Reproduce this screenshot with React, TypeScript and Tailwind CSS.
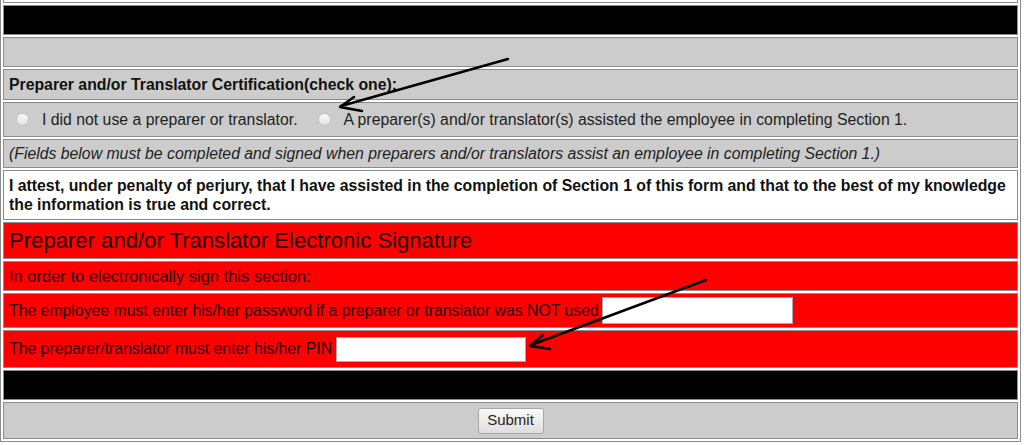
import React from 'react';

const row = 'shrink-0 border border-[#8c8c8c] px-[5px] flex items-center';

function Radio({ label }: { label: string }) {
	return (
		<label className="flex items-center">
			<span className="w-[13px] h-[13px] rounded-full border border-[#c4c4c4] bg-gradient-to-b from-[#fbfbfb] to-[#e2e2e2]" />
			<span className="ml-[13px]">{label}</span>
		</label>
	);
}

function Arrows() {
	return (
		<svg className="absolute inset-0 pointer-events-none" width="1024" height="445" viewBox="0 0 1024 445">
			<g stroke="#000" strokeWidth="2.5" strokeLinecap="round" fill="none">
				<line x1="508" y1="59" x2="341" y2="106" />
				<polyline points="354,97 340,107 362,111" strokeLinejoin="round" />
				<line x1="706" y1="280" x2="531" y2="345" />
				<polyline points="543,335 530,346 550,349" strokeLinejoin="round" />
			</g>
		</svg>
	);
}

export default function App() {
	return (
		<div className="relative w-[1024px] h-[445px] overflow-hidden bg-white text-[#222] font-['Liberation_Sans',Arial,sans-serif]">
			<div className="w-[1021px] border-x border-b border-[#8c8c8c] px-[2px] pb-[2px] flex flex-col gap-[2px]">
				<div className="shrink-0 h-[3px] border-x border-b border-[#8c8c8c] bg-white" />
				<div className={`${row} h-[30px] bg-black`} />
				<div className={`${row} h-[30px] bg-[#cccccc]`} />
				<div className={`${row} h-[31px] bg-[#cccccc] text-[15.8px] font-bold text-[#111]`}>
					Preparer and/or Translator Certification(check one):
				</div>
				<div className={`${row} h-[35px] bg-[#cccccc] text-[15.8px] pl-[12px] gap-[20px]`}>
					<Radio label="I did not use a preparer or translator." />
					<Radio label="A preparer(s) and/or translator(s) assisted the employee in completing Section 1." />
				</div>
				<div className={`${row} h-[29px] bg-[#cccccc] text-[15.8px] italic`}>
					(Fields below must be completed and signed when preparers and/or translators assist an employee in completing Section 1.)
				</div>
				<div className={`${row} h-[50px] bg-white text-[15.8px] font-bold leading-[19px] text-[#111] pr-[2px]`}>
					I attest, under penalty of perjury, that I have assisted in the completion of Section 1 of this form and that to the best of my knowledge the information is true and correct.
				</div>
				<div className={`${row} h-[37px] bg-[#ff0000] text-[22.1px] text-[#1a0000]`}>
					Preparer and/or Translator Electronic Signature
				</div>
				<div className={`${row} h-[30px] bg-[#ff0000] text-[16.5px] text-[#2a0000]`}>
					In order to electronically sign this section:
				</div>
				<div className={`${row} h-[35px] bg-[#ff0000] text-[15.8px] text-[#2a0000]`}>
					<span>The employee must enter his/her password if a preparer or translator was NOT used</span>
					<input
						type="password"
						className="ml-[3px] w-[191px] h-[27px] bg-white border border-[#a9a9a9] outline-none"
					/>
				</div>
				<div className={`${row} h-[38px] bg-[#ff0000] text-[15.8px] text-[#2a0000]`}>
					<span>The preparer/translator must enter his/her PIN</span>
					<input
						type="password"
						className="ml-[4px] w-[190px] h-[25px] bg-white border border-[#a9a9a9] outline-none"
					/>
				</div>
				<div className={`${row} h-[30px] bg-black`} />
				<div className={`${row} h-[37px] bg-[#cccccc] justify-center`}>
					<button className="w-[66px] h-[26px] rounded-[3px] border border-[#a8a8a8] bg-gradient-to-b from-[#fafafa] to-[#dedede] text-[15px] text-[#222]">
						Submit
					</button>
				</div>
			</div>
			<Arrows />
		</div>
	);
}
